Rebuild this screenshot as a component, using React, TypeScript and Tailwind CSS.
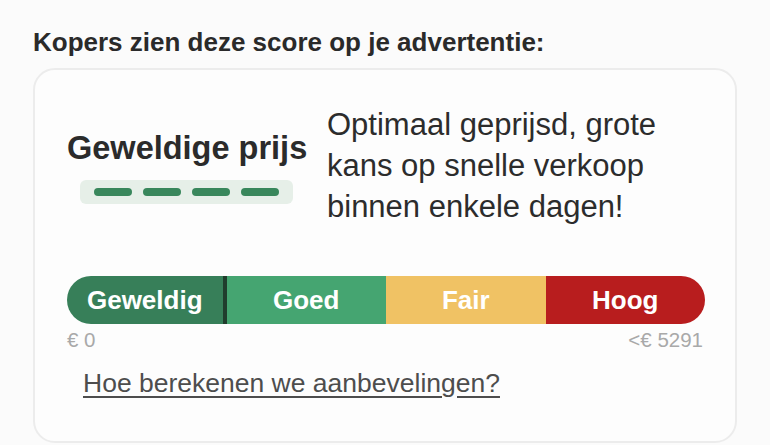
import React from "react";

/** Prijsbalk-segmenten, van laag naar hoog */
interface Segment {
  label: string;
  bg: string;
  rounded: string;
}

const segments: Segment[] = [
  { label: "Geweldig", bg: "bg-[#377f59]", rounded: "rounded-l-full" },
  { label: "Goed", bg: "bg-[#45a571]", rounded: "" },
  { label: "Fair", bg: "bg-[#f0c264]", rounded: "" },
  { label: "Hoog", bg: "bg-[#b81d1e]", rounded: "rounded-r-full" },
];

/** Vier streepjes onder het label: alle vier gevuld bij "Geweldige prijs" */
function ScoreDashes() {
  return (
    <div className="mt-[12px] ml-[13px] flex h-[24px] w-[213px] items-center gap-[11px] rounded-[6px] bg-[#e6efe8] px-[14px]">
      {[0, 1, 2, 3].map((i) => (
        <span key={i} className="h-[8px] w-[38px] rounded-full bg-[#39875c]" />
      ))}
    </div>
  );
}

function PriceBar() {
  return (
    <div className="ml-[32px] mr-[30px] mt-[49px]">
      <div className="flex h-[48px]">
        {segments.map((s, idx) => (
          // w-1/4 met border-box: de donkere scheidingslijn valt binnen het eerste kwart
          <div
            key={s.label}
            className={`flex w-1/4 items-center justify-center ${s.bg} ${s.rounded} ${
              idx === 0 ? "border-r-[4px] border-[#203d2d]" : ""
            }`}
          >
            <span className="text-[26px] font-bold leading-none text-white">{s.label}</span>
          </div>
        ))}
      </div>
      <div className="mt-[5px] flex justify-between text-[20.5px] leading-[22px] text-[#a9a9a9]">
        <span>€ 0</span>
        <span className="mr-[2px]">&lt;€ 5291</span>
      </div>
    </div>
  );
}

export default function App() {
  return (
    <div
      className="h-[445px] w-[770px] overflow-hidden bg-[#fbfbfb] px-[33px] pt-[27px]"
      style={{ fontFamily: '"Liberation Sans", Arial, sans-serif' }}
    >
      <h2 className="text-[26px] font-bold leading-[30px] text-[#2a2a2a]">
        Kopers zien deze score op je advertentie:
      </h2>

      <div className="mt-[11px] h-[375px] rounded-[22px] border-2 border-[#ececec] bg-[#fdfdfd] pt-[34px]">
        <div className="flex">
          <div className="ml-[32px] mt-[24px] w-[260px] shrink-0">
            <div className="text-[32.5px] font-bold leading-[40px] text-[#2b2b2b]">Geweldige prijs</div>
            <ScoreDashes />
          </div>
          <p className="text-[31px] leading-[41px] text-[#2c2c2c]">
            Optimaal geprijsd, grote
            <br />
            kans op snelle verkoop
            <br />
            binnen enkele dagen!
          </p>
        </div>

        <PriceBar />

        <a
          href="#"
          className="ml-[48px] mt-[17px] inline-block text-[26.5px] leading-[30px] text-[#4d4d4d] underline underline-offset-[4px]"
        >
          Hoe berekenen we aanbevelingen?
        </a>
      </div>
    </div>
  );
}
